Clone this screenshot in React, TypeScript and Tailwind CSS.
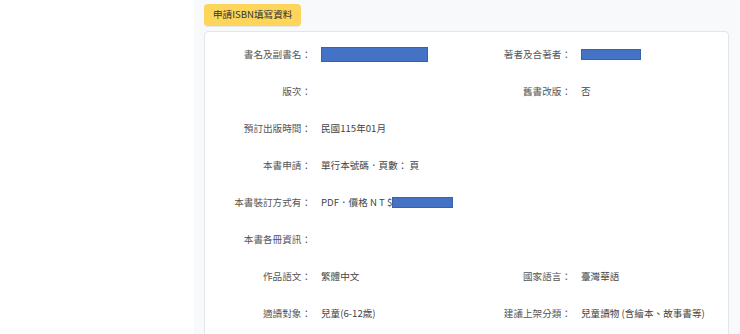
import React from 'react';

type Row = {
  label: string;
  value?: React.ReactNode;
  rightLabel?: string;
  rightValue?: React.ReactNode;
};

const Redacted: React.FC<{ w: string; h: string }> = ({ w, h }) => (
  <span className={`inline-block align-middle bg-[#4472c4] border border-[#3a62ab] ${w} ${h}`} />
);

const rows: Row[] = [
  {
    label: '書名及副書名：',
    value: <Redacted w="w-[107px]" h="h-[15px]" />,
    rightLabel: '著者及合著者：',
    rightValue: <Redacted w="w-[60px]" h="h-[11px]" />,
  },
  { label: '版次：', rightLabel: '舊書改版：', rightValue: '否' },
  { label: '預訂出版時間：', value: '民國115年01月' },
  { label: '本書申請：', value: '單行本號碼．頁數： 頁' },
  {
    label: '本書裝訂方式有：',
    value: (
      <span className="flex items-center">
        PDF．價格 N T $<Redacted w="w-[61px]" h="h-[11px]" />
      </span>
    ),
  },
  { label: '本書各冊資訊：' },
  { label: '作品語文：', value: '繁體中文', rightLabel: '國家語言：', rightValue: '臺灣華語' },
  {
    label: '適讀對象：',
    value: '兒童(6-12歲)',
    rightLabel: '建議上架分類：',
    rightValue: '兒童讀物 (含繪本、故事書等)',
  },
];

const Field: React.FC<{ label?: string; value?: React.ReactNode }> = ({ label, value }) => (
  <div className="flex items-center h-[37px] whitespace-nowrap">
    <span className="w-[106px] shrink-0 text-right text-[#555]">{label}</span>
    <span className="ml-[10px] text-[#444] flex items-center">{value}</span>
  </div>
);

export default function App() {
  return (
    <div
      className="flex w-full h-[334px] overflow-hidden text-[9.6px] leading-none"
      style={{ fontFamily: '"Noto Sans CJK TC", "Noto Sans", sans-serif' }}
    >
      <div className="w-[194px] shrink-0 bg-white" />
      <div className="flex-1 bg-[#f8f9fa] pl-[10px] pr-[11px] pt-[4px]">
        <div className="inline-flex items-center h-[22px] px-[9px] rounded-[4px] bg-[#fdd55b] text-[#333] shadow-[0_1px_1px_rgba(0,0,0,0.08)]">
          申請ISBN填寫資料
        </div>
        <div className="mt-[5px] bg-white border border-[#e3e5e8] rounded-t-[4px] pt-[4px] h-[400px]">
          {rows.map((r, i) => (
            <div key={i} className="grid grid-cols-[260px_1fr]">
              <Field label={r.label} value={r.value} />
              {r.rightLabel ? <Field label={r.rightLabel} value={r.rightValue} /> : <div />}
            </div>
          ))}
        </div>
      </div>
    </div>
  );
}
